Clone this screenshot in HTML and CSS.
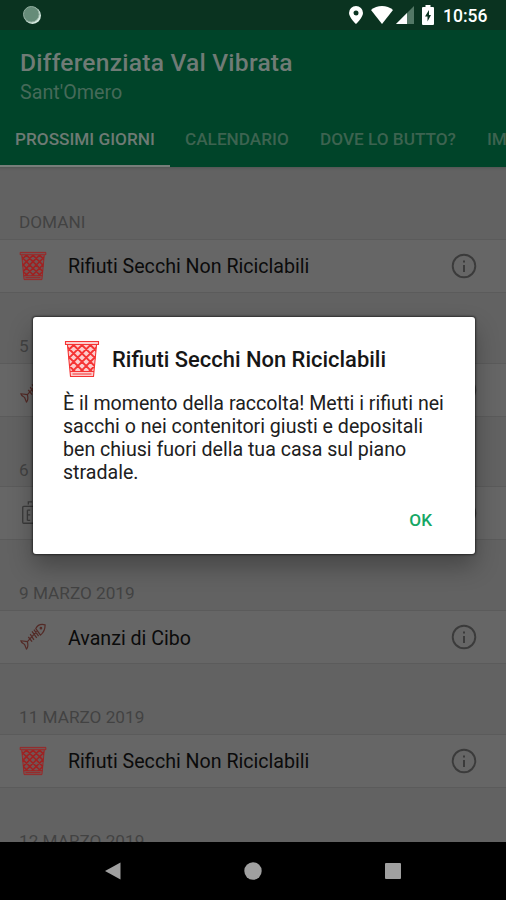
FILE: index.html
```html
<!DOCTYPE html>
<html lang="it">
<head>
<meta charset="utf-8">
<title>Differenziata Val Vibrata</title>
<link rel="stylesheet" href="styles.css">
</head>
<body>
<svg class="defs" aria-hidden="true">
  <clipPath id="basket"><path d="M3.500 5h29l-2.200 26.500H5.700z"/></clipPath>
  <symbol id="bin" viewBox="0 0 36 38">
    <path class="bin-shade" d="M1.500 1.500h33v3.500h-33zM3.500 5h29l-3 31.500h-23z"/>
    <g fill="none" stroke="currentColor">
      <path stroke-width="1.100" d="M1.500 1.500h33v3h-33zM3.500 5l3 31.500h23L32.500 5M6 31.500h24M8.500 34h19"/>
      <path clip-path="url(#basket)" stroke-width="1.900" d="M-15.600 5l30 30M-7.200 5l30 30M1.200 5l30 30M9.600 5l30 30M18 5l30 30M26.400 5l30 30M-24 5l30 30M60 5l-30 30M51.600 5l-30 30M43.200 5l-30 30M34.800 5l-30 30M26.400 5l-30 30M18 5l-30 30M9.600 5l-30 30"/>
    </g>
  </symbol>
  <symbol id="fish" viewBox="0 0 30 30">
    <g fill="none" stroke="currentColor" stroke-width="1.300" stroke-linejoin="round">
      <path d="M18 6c2-4 6-5 10-4 0 5-1 8-5 11zM18 6l5 7M19 9L9 20M9 20l-7-1c1 3 3 3 4 4l2 5c2-2 2-4 1-8zM16 7l5 7M14 9l5 7M12 12l4 6M10 15l4 5"/>
      <circle cx="23.500" cy="5.500" r=".8"/>
    </g>
  </symbol>
  <symbol id="carton" viewBox="0 0 30 30">
    <g fill="none" stroke="currentColor" stroke-width="1.400">
      <path d="M20 8H5q-1 0-1 1v16q0 1 1 1h15M9 12v11M12 12h-3M12 17h-3M12 23h-3M10 6V3h4"/>
    </g>
  </symbol>
  <symbol id="info" viewBox="0 0 26 26">
    <circle cx="13" cy="13" r="11.300" fill="none" stroke="currentColor" stroke-width="1.900"/>
    <path d="M12 12h2v7h-2zM12 7.500h2v2h-2z" fill="currentColor"/>
  </symbol>
</svg>
<div class="screen">
  <div class="status">
    <svg class="sync" viewBox="0 0 20 20"><circle cx="10.500" cy="10.500" r="8.500" fill="#d5e9df"/><circle cx="9.300" cy="9.300" r="7.800" fill="#668c79" stroke="#91ad9e"/></svg>
    <svg class="pin" viewBox="0 0 14 18"><path fill="#fff" fill-rule="evenodd" d="M7 0a7 7 0 0 0-7 7c0 4.500 7 11 7 11s7-6.500 7-11a7 7 0 0 0-7-7zm0 4.500a2.500 2.500 0 1 1 0 5 2.500 2.500 0 0 1 0-5z"/></svg>
    <svg class="wifi" viewBox="0 0 22 18"><path fill="#fff" d="M0 4C6-1.300 16-1.300 22 4L11 18z"/></svg>
    <svg class="signal" viewBox="0 0 18 18"><path fill="#537765" d="M0 18L18 0v18z"/><path fill="#fff" d="M0 18L11 7v11z"/></svg>
    <svg class="battery" viewBox="0 0 12 20"><path fill="#fff" d="M3.500 0h5v2H11q1 0 1 1v16q0 1-1 1H1q-1 0-1-1V3q0-1 1-1h2.500z"/><path fill="#0a3320" d="M7 5l-4 6.500H5.500v5l3.500-6.500H7z"/></svg>
    <span class="clock">10:56</span>
  </div>
  <header class="appbar">
    <h1>Differenziata Val Vibrata</h1>
    <p class="place">Sant'Omero</p>
    <nav class="tabs">
      <span class="tab active"><span class="t1">PROSSIMI GIORNI</span></span>
      <span class="tab"><span class="t2">CALENDARIO</span></span>
      <span class="tab"><span class="t3">DOVE LO BUTTO?</span></span>
      <span class="tab"><span>IMPOSTAZIONI</span></span>
    </nav>
  </header>
  <main class="list">
    <h2>DOMANI</h2>
    <div class="row"><svg class="icon bin"><use href="#bin"/></svg><span class="name">Rifiuti Secchi Non Riciclabili</span><svg class="info"><use href="#info"/></svg></div>
    <h2>5</h2>
    <div class="row"><svg class="icon fish"><use href="#fish"/></svg><span class="name"></span><svg class="info"><use href="#info"/></svg></div>
    <h2>6</h2>
    <div class="row"><svg class="icon carton"><use href="#carton"/></svg><span class="name"></span><svg class="info"><use href="#info"/></svg></div>
    <h2>9 MARZO 2019</h2>
    <div class="row"><svg class="icon fish"><use href="#fish"/></svg><span class="name">Avanzi di Cibo</span><svg class="info"><use href="#info"/></svg></div>
    <h2>11 MARZO 2019</h2>
    <div class="row"><svg class="icon bin"><use href="#bin"/></svg><span class="name">Rifiuti Secchi Non Riciclabili</span><svg class="info"><use href="#info"/></svg></div>
    <h2>12 MARZO 2019</h2>
  </main>
  <footer class="navbar">
    <svg viewBox="0 0 20 20"><path fill="#a0a0a0" d="M17.500 1.500v17L2 10z"/></svg>
    <svg viewBox="0 0 20 20"><circle cx="10" cy="10" r="8.700" fill="#a0a0a0"/></svg>
    <svg viewBox="0 0 20 20"><rect x="2" y="2" width="16" height="16" rx="1" fill="#a0a0a0"/></svg>
  </footer>
  <section class="dialog" role="dialog">
    <div class="dialog-head"><svg class="dialog-bin"><use href="#bin"/></svg><h3>Rifiuti Secchi Non Riciclabili</h3></div>
    <p class="message">È il momento della raccolta! Metti i rifiuti nei<br>sacchi o nei contenitori giusti e depositali<br>ben chiusi fuori della tua casa sul piano<br>stradale.</p>
    <div class="actions"><button>OK</button></div>
  </section>
</div>
</body>
</html>
```
FILE: styles.css
```css
* { box-sizing: border-box; margin: 0; padding: 0; }
body { font-family: Roboto, sans-serif; background: #000; overflow: hidden; }
svg { display: block; flex: none; }
.defs { position: absolute; width: 0; height: 0; }
.screen { position: relative; width: 506px; height: 900px; display: flex; flex-direction: column; overflow: hidden; }

.status { height: 30px; flex: none; background: #0a3320; display: flex; align-items: center; padding: 0 0 0 22px; }
.sync { width: 20px; height: 20px; margin-right: auto; }
.pin { width: 14px; height: 18px; margin-right: 8px; }
.wifi { width: 22px; height: 18px; margin-right: 3px; }
.signal { width: 18px; height: 18px; margin-right: 8px; }
.battery { width: 12px; height: 20px; margin-right: 9px; }
.clock { width: 63px; color: #fff; font-size: 17.500px; font-weight: 500; line-height: 30px; padding-top: 2px; }

.appbar { height: 137px; flex: none; background: #004429; display: flex; flex-direction: column; }
.appbar h1 { margin: 18px 0 0 20px; font-size: 24.600px; line-height: 30px; font-weight: 500; letter-spacing: .22px; color: #707b76; white-space: nowrap; }
.place { margin: 3px 0 0 20px; font-size: 19.700px; line-height: 24px; color: #466a59; }
.tabs { display: flex; margin-top: auto; height: 56px; width: 640px; }
.tab { padding: 2px 15px 0; display: flex; align-items: center; font-size: 17.200px; font-weight: 500; color: #3d6350; white-space: nowrap; border-bottom: 2px solid transparent; }
.tab.active { color: #6e7a74; border-color: #777e7a; }
.t1 { width: 140px; }
.t2 { width: 105px; }
.t3 { width: 137px; }

.list { flex: 1; min-height: 0; overflow: hidden; background: #626262; padding-top: 2px; box-shadow: inset 0 4px 3px -3px #4f5552; }
.list h2 { height: 69.800px; padding: 43px 0 0 19px; font-size: 17.200px; line-height: 20px; font-weight: 400; color: #424242; white-space: nowrap; }
.row { height: 54px; display: flex; align-items: center; padding: 0 29px 0 19px; background: #666; border: solid #5b5b5b; border-width: 1px 0; }
.icon { width: 28px; height: 30px; margin-right: 21px; }
.bin { color: #a02020; }
.fish { color: #532a26; }
.carton { color: #3b3b3b; }
.bin-shade { fill: currentColor; opacity: .25; }
.name { flex: 1; font-size: 19.630px; padding-top: 2px; color: #0b0b0b; white-space: nowrap; }
.info { width: 26px; height: 26px; color: #3b3b3b; }

.navbar { height: 58px; flex: none; background: #000; display: flex; justify-content: center; gap: 120px; padding-top: 19px; }
.navbar svg { width: 20px; height: 20px; }

.dialog { position: absolute; left: 33px; top: 317px; width: 442px; height: 237px; background: #fff; border-radius: 3px; box-shadow: 0 0 2px 1px rgba(0,0,0,.5), 0 12px 24px rgba(0,0,0,.3); padding: 22px 30px 0; display: flex; flex-direction: column; }
.dialog-head { display: flex; align-items: center; height: 39px; }
.dialog-bin { width: 36px; height: 38px; color: #f53434; margin: 0 12px 0 1px; }
.dialog h3 { font-size: 21.950px; line-height: 28px; padding-top: 2px; font-weight: 500; color: #161616; white-space: nowrap; }
.message { margin-top: 14px; font-size: 19.600px; line-height: 23px; color: #202020; white-space: nowrap; }
.actions { display: flex; justify-content: flex-end; margin-top: 24px; padding-right: 13px; }
.actions button { border: 0; background: none; font: 500 17.200px/24px Roboto, sans-serif; color: #16a765; }
```
